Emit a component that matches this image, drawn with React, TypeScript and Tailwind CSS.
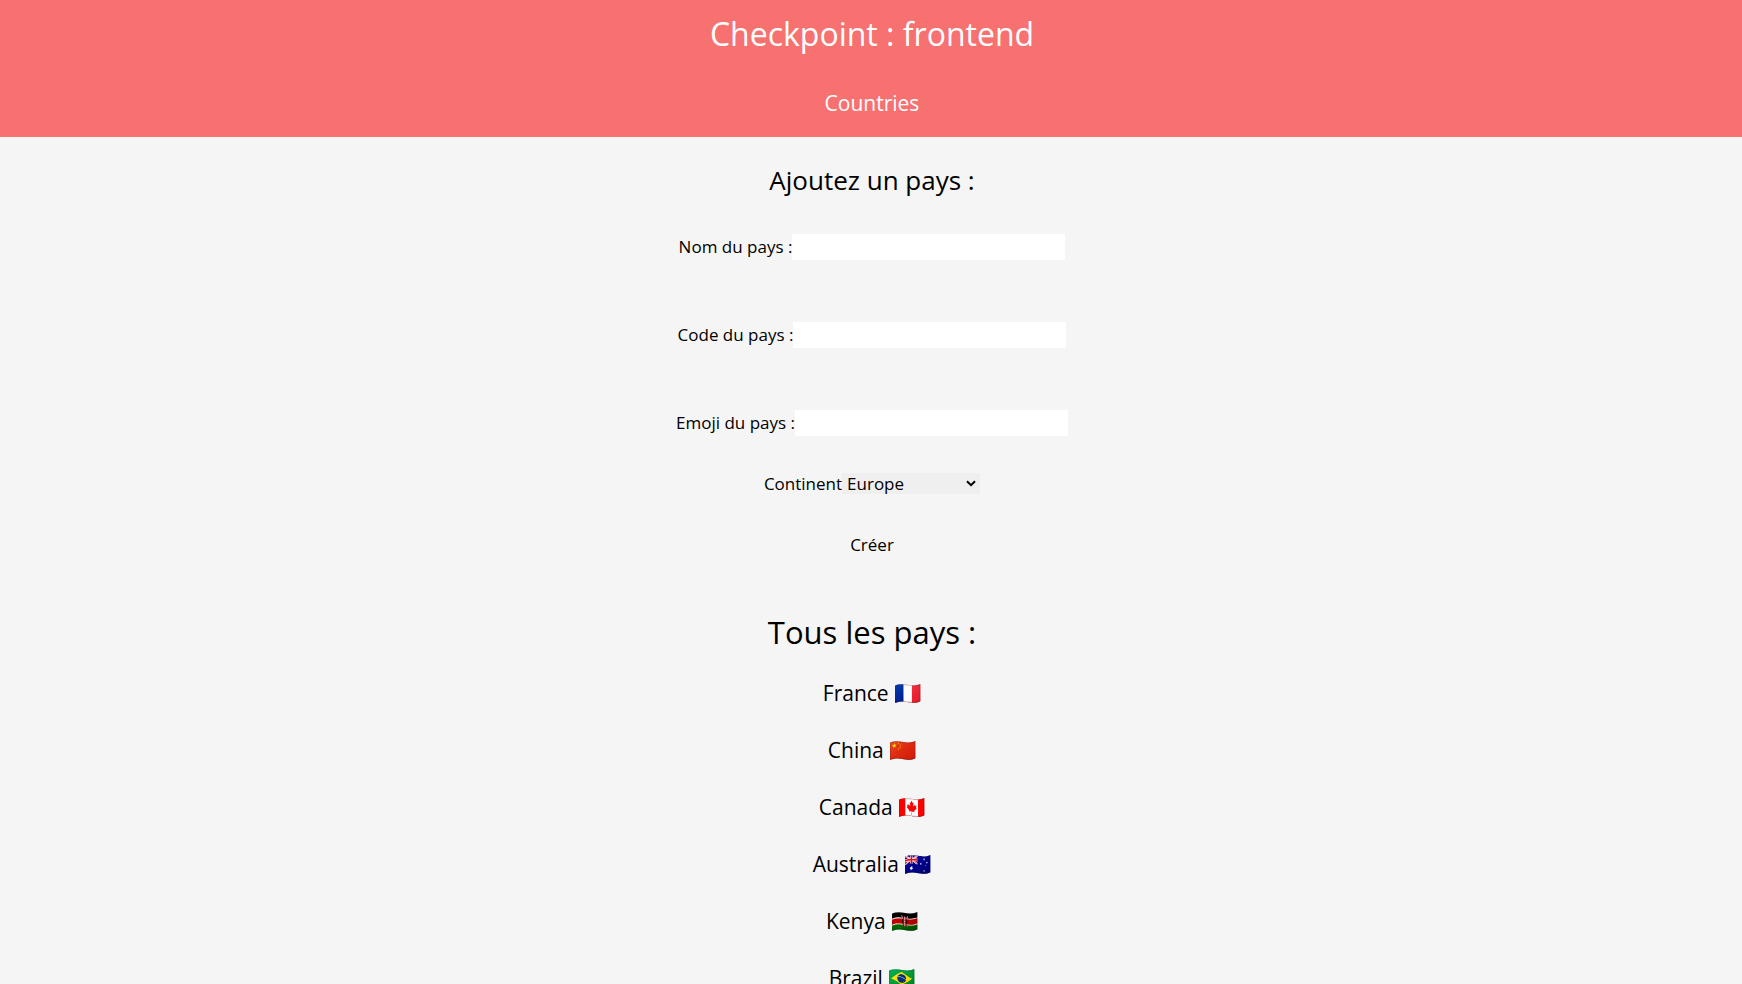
import { useId, type FormEvent } from "react";

const fields = ["Nom du pays :", "Code du pays :", "Emoji du pays :"];

const countries = [
  { name: "France", flag: "🇫🇷" },
  { name: "China", flag: "🇨🇳" },
  { name: "Canada", flag: "🇨🇦" },
  { name: "Australia", flag: "🇦🇺" },
  { name: "Kenya", flag: "🇰🇪" },
  { name: "Brazil", flag: "🇧🇷" },
];

function Field({ label }: { label: string }) {
  const id = useId();
  return (
    <div className="flex h-[26px] items-center justify-center">
      <label htmlFor={id} className="leading-6">{label}</label>
      <input id={id} type="text" className="h-[26px] w-[273px] bg-white px-1 outline-none" />
    </div>
  );
}

export default function App() {
  const handleSubmit = (event: FormEvent) => event.preventDefault();

  return (
    <div className="min-h-screen bg-[#f5f5f5] font-['Open_Sans','Noto_Sans',sans-serif] text-black">
      <header className="flex flex-col items-center gap-7 bg-[#f87171] pt-[11px] pb-4 pl-0.5 text-white">
        <h1 className="text-[32px] leading-[46px]">Checkpoint : frontend</h1>
        <a href="#countries" className="text-[21px] leading-9">Countries</a>
      </header>
      <main className="flex flex-col items-center pl-0.5">
        <h2 className="mt-[23px] text-[26px] leading-10">Ajoutez un pays :</h2>
        <form onSubmit={handleSubmit} className="mt-[34px] flex flex-col items-center text-[17px]">
          <div className="flex flex-col items-center gap-[62px]">
            {fields.map((label) => (
              <Field key={label} label={label} />
            ))}
          </div>
          <div className="mt-[37px] flex h-[21px] items-center">
            <label htmlFor="continent" className="leading-[21px]">Continent</label>
            <div className="relative flex">
              <select
                id="continent"
                className="h-[21px] w-[138px] appearance-none bg-[#efefef] pl-[5px] leading-[21px] outline-none"
              >
                <option>Europe</option>
                <option>Asia</option>
                <option>Africa</option>
                <option>Oceania</option>
              </select>
              <svg
                viewBox="0 0 10 7"
                className="pointer-events-none absolute top-[7px] right-1 h-[7px] w-2.5"
                fill="none"
                stroke="currentColor"
                strokeWidth="2"
                aria-hidden="true"
              >
                <path d="M1 1.2 5 5.2 9 1.2" />
              </svg>
            </div>
          </div>
          <button type="submit" className="mt-[39px] leading-6">Créer</button>
        </form>
        <h2 className="mt-[52px] text-[31px] leading-[46px]">Tous les pays :</h2>
        <ul id="countries" className="mt-[25px] flex flex-col gap-[33px] pb-8 text-center text-[21px]">
          {countries.map(({ name, flag }) => (
            <li key={name} className="h-6 leading-6">
              {name} <span className="text-[22px]">{flag}</span>
            </li>
          ))}
        </ul>
      </main>
    </div>
  );
}
